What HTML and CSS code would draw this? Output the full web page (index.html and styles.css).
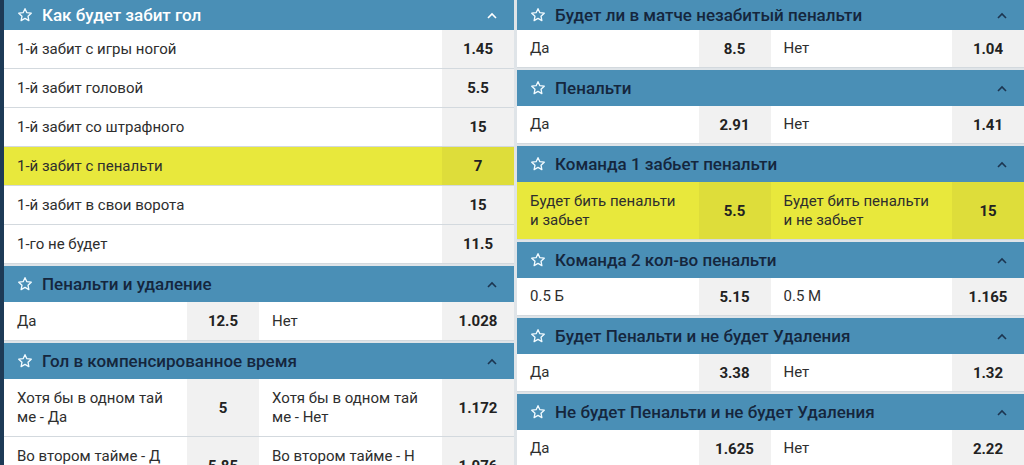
FILE: index.html
```html
<!DOCTYPE html>
<html lang="ru">
<head>
<meta charset="utf-8">
<title>Пенальти</title>
<link rel="stylesheet" href="styles.css">
</head>
<body>
<div class="page">
  <div class="col col-left">
    <section class="market">
      <div class="hd first light">
        <svg class="star" viewBox="0 0 24 24"><path d="M12 2.5l2.8 6 6.6.8-4.9 4.5 1.3 6.6L12 17.1l-5.8 3.3 1.3-6.6-4.9-4.5 6.6-.8z"/></svg>
        <span class="title">Как будет забит гол</span>
        <svg class="chev" viewBox="0 0 10 7"><polyline points="1,6 5,2 9,6"/></svg>
      </div>
      <div class="row"><div class="lbl">1-й забит с игры ногой</div><div class="odd">1.45</div></div>
      <div class="row"><div class="lbl">1-й забит головой</div><div class="odd">5.5</div></div>
      <div class="row"><div class="lbl">1-й забит со штрафного</div><div class="odd">15</div></div>
      <div class="row hl"><div class="lbl">1-й забит с пенальти</div><div class="odd">7</div></div>
      <div class="row"><div class="lbl">1-й забит в свои ворота</div><div class="odd">15</div></div>
      <div class="row"><div class="lbl">1-го не будет</div><div class="odd">11.5</div></div>
    </section>
    <section class="market">
      <div class="hd">
        <svg class="star" viewBox="0 0 24 24"><path d="M12 2.5l2.8 6 6.6.8-4.9 4.5 1.3 6.6L12 17.1l-5.8 3.3 1.3-6.6-4.9-4.5 6.6-.8z"/></svg>
        <span class="title">Пенальти и удаление</span>
        <svg class="chev" viewBox="0 0 10 7"><polyline points="1,6 5,2 9,6"/></svg>
      </div>
      <div class="row two">
        <div class="cell"><div class="lbl">Да</div><div class="odd">12.5</div></div>
        <div class="cell"><div class="lbl">Нет</div><div class="odd">1.028</div></div>
      </div>
    </section>
    <section class="market">
      <div class="hd">
        <svg class="star" viewBox="0 0 24 24"><path d="M12 2.5l2.8 6 6.6.8-4.9 4.5 1.3 6.6L12 17.1l-5.8 3.3 1.3-6.6-4.9-4.5 6.6-.8z"/></svg>
        <span class="title">Гол в компенсированное время</span>
        <svg class="chev" viewBox="0 0 10 7"><polyline points="1,6 5,2 9,6"/></svg>
      </div>
      <div class="row two tall">
        <div class="cell"><div class="lbl">Хотя бы в одном тай<br>ме - Да</div><div class="odd">5</div></div>
        <div class="cell"><div class="lbl">Хотя бы в одном тай<br>ме - Нет</div><div class="odd">1.172</div></div>
      </div>
      <div class="row two tall">
        <div class="cell"><div class="lbl">Во втором тайме - Д<br>а</div><div class="odd">5.85</div></div>
        <div class="cell"><div class="lbl">Во втором тайме - Н<br>ет</div><div class="odd">1.076</div></div>
      </div>
    </section>
  </div>

  <div class="col col-right">
    <section class="market">
      <div class="hd first">
        <svg class="star" viewBox="0 0 24 24"><path d="M12 2.5l2.8 6 6.6.8-4.9 4.5 1.3 6.6L12 17.1l-5.8 3.3 1.3-6.6-4.9-4.5 6.6-.8z"/></svg>
        <span class="title">Будет ли в матче незабитый пенальти</span>
        <svg class="chev" viewBox="0 0 10 7"><polyline points="1,6 5,2 9,6"/></svg>
      </div>
      <div class="row two">
        <div class="cell"><div class="lbl">Да</div><div class="odd">8.5</div></div>
        <div class="cell"><div class="lbl">Нет</div><div class="odd">1.04</div></div>
      </div>
    </section>
    <section class="market">
      <div class="hd">
        <svg class="star" viewBox="0 0 24 24"><path d="M12 2.5l2.8 6 6.6.8-4.9 4.5 1.3 6.6L12 17.1l-5.8 3.3 1.3-6.6-4.9-4.5 6.6-.8z"/></svg>
        <span class="title">Пенальти</span>
        <svg class="chev" viewBox="0 0 10 7"><polyline points="1,6 5,2 9,6"/></svg>
      </div>
      <div class="row two">
        <div class="cell"><div class="lbl">Да</div><div class="odd">2.91</div></div>
        <div class="cell"><div class="lbl">Нет</div><div class="odd">1.41</div></div>
      </div>
    </section>
    <section class="market">
      <div class="hd">
        <svg class="star" viewBox="0 0 24 24"><path d="M12 2.5l2.8 6 6.6.8-4.9 4.5 1.3 6.6L12 17.1l-5.8 3.3 1.3-6.6-4.9-4.5 6.6-.8z"/></svg>
        <span class="title">Команда 1 забьет пенальти</span>
        <svg class="chev" viewBox="0 0 10 7"><polyline points="1,6 5,2 9,6"/></svg>
      </div>
      <div class="row two tall hl">
        <div class="cell"><div class="lbl">Будет бить пенальти<br>и забьет</div><div class="odd">5.5</div></div>
        <div class="cell"><div class="lbl">Будет бить пенальти<br>и не забьет</div><div class="odd">15</div></div>
      </div>
    </section>
    <section class="market">
      <div class="hd">
        <svg class="star" viewBox="0 0 24 24"><path d="M12 2.5l2.8 6 6.6.8-4.9 4.5 1.3 6.6L12 17.1l-5.8 3.3 1.3-6.6-4.9-4.5 6.6-.8z"/></svg>
        <span class="title">Команда 2 кол-во пенальти</span>
        <svg class="chev" viewBox="0 0 10 7"><polyline points="1,6 5,2 9,6"/></svg>
      </div>
      <div class="row two">
        <div class="cell"><div class="lbl">0.5 Б</div><div class="odd">5.15</div></div>
        <div class="cell"><div class="lbl">0.5 М</div><div class="odd">1.165</div></div>
      </div>
    </section>
    <section class="market">
      <div class="hd">
        <svg class="star" viewBox="0 0 24 24"><path d="M12 2.5l2.8 6 6.6.8-4.9 4.5 1.3 6.6L12 17.1l-5.8 3.3 1.3-6.6-4.9-4.5 6.6-.8z"/></svg>
        <span class="title">Будет Пенальти и не будет Удаления</span>
        <svg class="chev" viewBox="0 0 10 7"><polyline points="1,6 5,2 9,6"/></svg>
      </div>
      <div class="row two">
        <div class="cell"><div class="lbl">Да</div><div class="odd">3.38</div></div>
        <div class="cell"><div class="lbl">Нет</div><div class="odd">1.32</div></div>
      </div>
    </section>
    <section class="market">
      <div class="hd">
        <svg class="star" viewBox="0 0 24 24"><path d="M12 2.5l2.8 6 6.6.8-4.9 4.5 1.3 6.6L12 17.1l-5.8 3.3 1.3-6.6-4.9-4.5 6.6-.8z"/></svg>
        <span class="title">Не будет Пенальти и не будет Удаления</span>
        <svg class="chev" viewBox="0 0 10 7"><polyline points="1,6 5,2 9,6"/></svg>
      </div>
      <div class="row two">
        <div class="cell"><div class="lbl">Да</div><div class="odd">1.625</div></div>
        <div class="cell"><div class="lbl">Нет</div><div class="odd">2.22</div></div>
      </div>
    </section>
  </div>
</div>
</body>
</html>
```

FILE: styles.css
```css
html, body {
  margin: 0;
  padding: 0;
}
body {
  font-family: Roboto, "Liberation Sans", Arial, sans-serif;
  color: #2b2b2b;
  background: #dfe4e8;
}
.page {
  display: grid;
  grid-template-columns: 510px 507px;
  column-gap: 3px;
  width: 1020px;
  height: 465px;
  overflow: hidden;
  border-left: 4px solid #1d3a56;
  background: #dfe4e8;
}
.col {
  display: flex;
  flex-direction: column;
  gap: 2px;
  min-width: 0;
}
.market {
  display: flex;
  flex-direction: column;
}
.hd {
  height: 36px;
  flex: 0 0 auto;
  display: flex;
  align-items: center;
  padding: 0 17px 0 13px;
  background: #4a8fb6;
  color: #15263d;
  font-size: 17px;
  font-weight: 500;
}
.hd.first {
  height: 30px;
}
.star {
  width: 16px;
  height: 16px;
  fill: none;
  stroke: #f2fbff;
  stroke-width: 2;
  stroke-linejoin: round;
  margin-right: 9px;
  flex: 0 0 auto;
}
.title {
  flex: 1 1 auto;
  white-space: nowrap;
}
.chev {
  width: 10px;
  height: 7px;
  fill: none;
  stroke: #1c3550;
  stroke-width: 1.6;
  flex: 0 0 auto;
}
.hd.light {
  color: #ffffff;
}
.hd.light .chev {
  stroke: #ffffff;
}
.row {
  display: grid;
  grid-template-columns: 1fr 72px;
  height: 37px;
  flex: 0 0 auto;
  background: #ffffff;
  border-bottom: 1px solid #d3d9de;
  font-size: 15px;
}
.col-left .row {
  height: 38px;
}
.row.tall,
.col-left .row.tall {
  height: 57px;
}
.row.two {
  grid-template-columns: 1fr 1fr;
}
.cell {
  display: grid;
  grid-template-columns: 1fr 72px;
  min-width: 0;
}
.lbl {
  display: flex;
  align-items: center;
  padding-left: 13px;
  line-height: 19px;
  color: #2e2e2e;
  white-space: nowrap;
}
.odd {
  display: flex;
  align-items: center;
  justify-content: center;
  background: #f1f1f1;
  font-weight: 700;
  color: #222222;
}
.row.hl {
  background: #e8e83c;
}
.row.hl .odd {
  background: #dedd3a;
}
```
